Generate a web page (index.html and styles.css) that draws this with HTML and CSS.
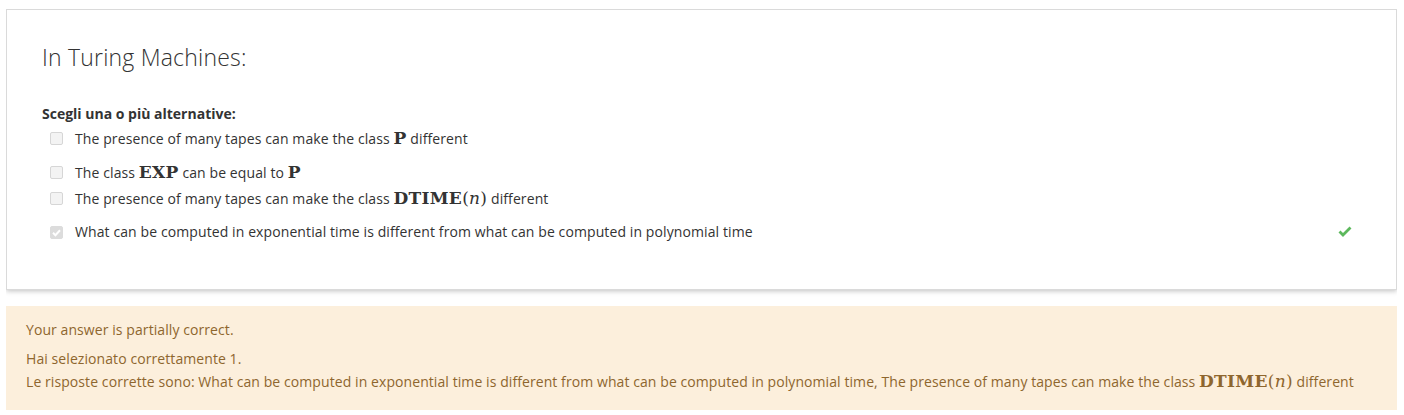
FILE: index.html
```html
<!DOCTYPE html>
<html lang="it">
<head>
<meta charset="utf-8">
<title>Quiz</title>
<link rel="stylesheet" href="styles.css">
</head>
<body>
<div class="card">
  <h2 class="qtext">In Turing Machines:</h2>
  <div class="prompt">Scegli una o più alternative:</div>
  <div class="answers">
    <div class="opt r1"><span class="cb"></span><span class="lbl">The presence of many tapes can make the class <span class="m b">P</span> different</span></div>
    <div class="opt r2"><span class="cb"></span><span class="lbl">The class <span class="m b">EXP</span> can be equal to <span class="m b">P</span></span></div>
    <div class="opt r3"><span class="cb"></span><span class="lbl">The presence of many tapes can make the class <span class="m"><b>DTIME</b>(<i>n</i>)</span> different</span></div>
    <div class="opt r4"><span class="cb checked"><svg viewBox="0 0 13 13" width="13" height="13"><path d="M3 6.8 L5.4 9.2 L10 4.2" fill="none" stroke="#fff" stroke-width="2"/></svg></span><span class="lbl">What can be computed in exponential time is different from what can be computed in polynomial time</span>
      <svg class="tick" viewBox="0 0 14 11" width="14" height="11"><path d="M1.5 5.5 L5 9 L12.5 1.5" fill="none" stroke="#5cb85c" stroke-width="2.8"/></svg>
    </div>
  </div>
</div>
<div class="feedback">
  <div class="fb1">Your answer is partially correct.</div>
  <div class="fb2">Hai selezionato correttamente 1.<br>Le risposte corrette sono: What can be computed in exponential time is different from what can be computed in polynomial time, The presence of many tapes can make the class <span class="m"><b>DTIME</b>(<i>n</i>)</span> different</div>
</div>
</body>
</html>
```
FILE: styles.css
```css
html, body { background: #fff; }
body {
  margin: 9px 7px 0 6px;
  font-family: "Open Sans", "Noto Sans", sans-serif;
  font-size: 14px;
  letter-spacing: 0.1px;
  color: #333;
}
.card {
  background: #fff;
  border: 1px solid #dadada;
  box-shadow: 0 1px 5px rgba(0,0,0,0.25);
  padding: 32px 44px 25px 35px;
  height: 281px;
  box-sizing: border-box;
}
.qtext {
  margin: 0;
  font-size: 23px;
  font-weight: 300;
  letter-spacing: 0.2px;
  line-height: 30px;
  color: #333;
}
.prompt {
  margin-top: 32px;
  font-weight: 700;
  font-size: 14px;
  line-height: 20px;
  letter-spacing: 0;
}
.answers { display: flex; flex-direction: column; }
.opt {
  display: flex;
  align-items: center;
  padding-left: 8px;
  height: 24px;
  line-height: 20px;
}
.r1 { margin-top: 2px; }
.r2 { margin-top: 10px; }
.r3 { margin-top: 2px; }
.r4 { margin-top: 10px; }
.cb {
  width: 13px; height: 13px;
  box-sizing: border-box;
  border: 1px solid #d6d6d6;
  border-radius: 2px;
  background: #f3f3f3;
  margin-right: 12px;
  flex: none;
  display: flex;
}
.cb.checked { background: #dcdcdc; border-color: #dcdcdc; }
.cb.checked svg { margin: -1px; }
.lbl { flex: 1; }
.tick { margin-top: -2px; }
.m { font-family: "DejaVu Serif", "Liberation Serif", serif; font-size: 17px; letter-spacing: 0.3px; }
.m.b, .m b { font-weight: 700; }
.m i { font-style: italic; }
.feedback {
  margin-top: 16px;
  background: #fcefdc;
  color: #8e662e;
  padding: 12px 20px 18px 20px;
  height: 104px;
  box-sizing: border-box;
  line-height: 23px;
  letter-spacing: 0.08px;
}
.fb1 { margin-bottom: 6px; }
```
